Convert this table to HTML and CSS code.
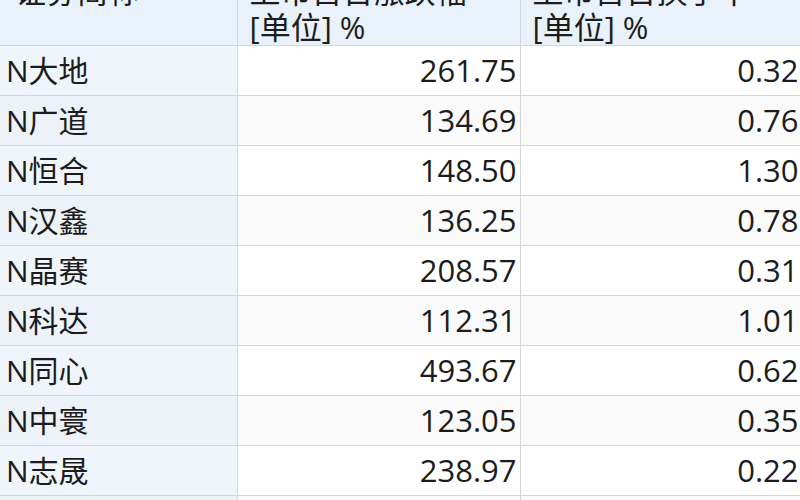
FILE: index.html
```html
<!DOCTYPE html>
<html lang="zh-CN">
<head>
<meta charset="utf-8">
<link rel="stylesheet" href="styles.css">
</head>
<body>
<div class="viewport">
<table class="grid">
  <colgroup>
    <col class="w1">
    <col class="w2">
    <col class="w3">
  </colgroup>
  <thead>
    <tr>
      <th class="c1">证券简称</th>
      <th class="c2">上市首日涨跌幅<br>[单位] %</th>
      <th class="c3">上市首日换手率<br>[单位] %</th>
    </tr>
  </thead>
  <tbody>
    <tr><td class="c1">N大地</td><td class="c2">261.75</td><td class="c3">0.32</td></tr>
    <tr><td class="c1">N广道</td><td class="c2">134.69</td><td class="c3">0.76</td></tr>
    <tr><td class="c1">N恒合</td><td class="c2">148.50</td><td class="c3">1.30</td></tr>
    <tr><td class="c1">N汉鑫</td><td class="c2">136.25</td><td class="c3">0.78</td></tr>
    <tr><td class="c1">N晶赛</td><td class="c2">208.57</td><td class="c3">0.31</td></tr>
    <tr><td class="c1">N科达</td><td class="c2">112.31</td><td class="c3">1.01</td></tr>
    <tr><td class="c1">N同心</td><td class="c2">493.67</td><td class="c3">0.62</td></tr>
    <tr><td class="c1">N中寰</td><td class="c2">123.05</td><td class="c3">0.35</td></tr>
    <tr><td class="c1">N志晟</td><td class="c2">238.97</td><td class="c3">0.22</td></tr>
    <tr><td class="c1">N华岭</td><td class="c2">150.00</td><td class="c3">0.40</td></tr>
  </tbody>
</table>
</div>
</body>
</html>
```

FILE: styles.css
```css
html, body {
  margin: 0;
  padding: 0;
  background: #ffffff;
}
.viewport {
  width: 800px;
  height: 500px;
  overflow: hidden;
}
.grid {
  border-collapse: collapse;
  table-layout: fixed;
  width: 810px;
  margin-top: -27px;
  font-family: "Open Sans", "Noto Sans CJK SC", sans-serif;
  font-size: 31px;
  color: #1c1c1c;
}
.w1 { width: 237px; }
.w2 { width: 283px; }
.w3 { width: 290px; }
.grid th, .grid td {
  border-right: 1px solid #d6d6d6;
  border-bottom: 1px solid #d6d6d6;
  padding: 0;
  white-space: nowrap;
  overflow: hidden;
}
.grid th {
  background: #e9f2fb;
  font-weight: normal;
  text-align: left;
  line-height: 36px;
  height: 72px;
  vertical-align: top;
  padding-left: 12px;
}
.grid th.c1 {
  padding-left: 15px;
}
.grid td {
  height: 49px;
  line-height: 49px;
  background: #ffffff;
}
.grid tbody tr:nth-child(even) td {
  background: #fafafa;
}
.grid td.c1 {
  background: #f0f5fb;
  padding-left: 6px;
  font-size: 30px;
}
.grid tbody tr:nth-child(even) td.c1 {
  background: #edf2f9;
}
.grid td.c2 {
  text-align: right;
  padding-right: 3px;
}
.grid td.c3 {
  text-align: right;
  padding-right: 11px;
}
```
